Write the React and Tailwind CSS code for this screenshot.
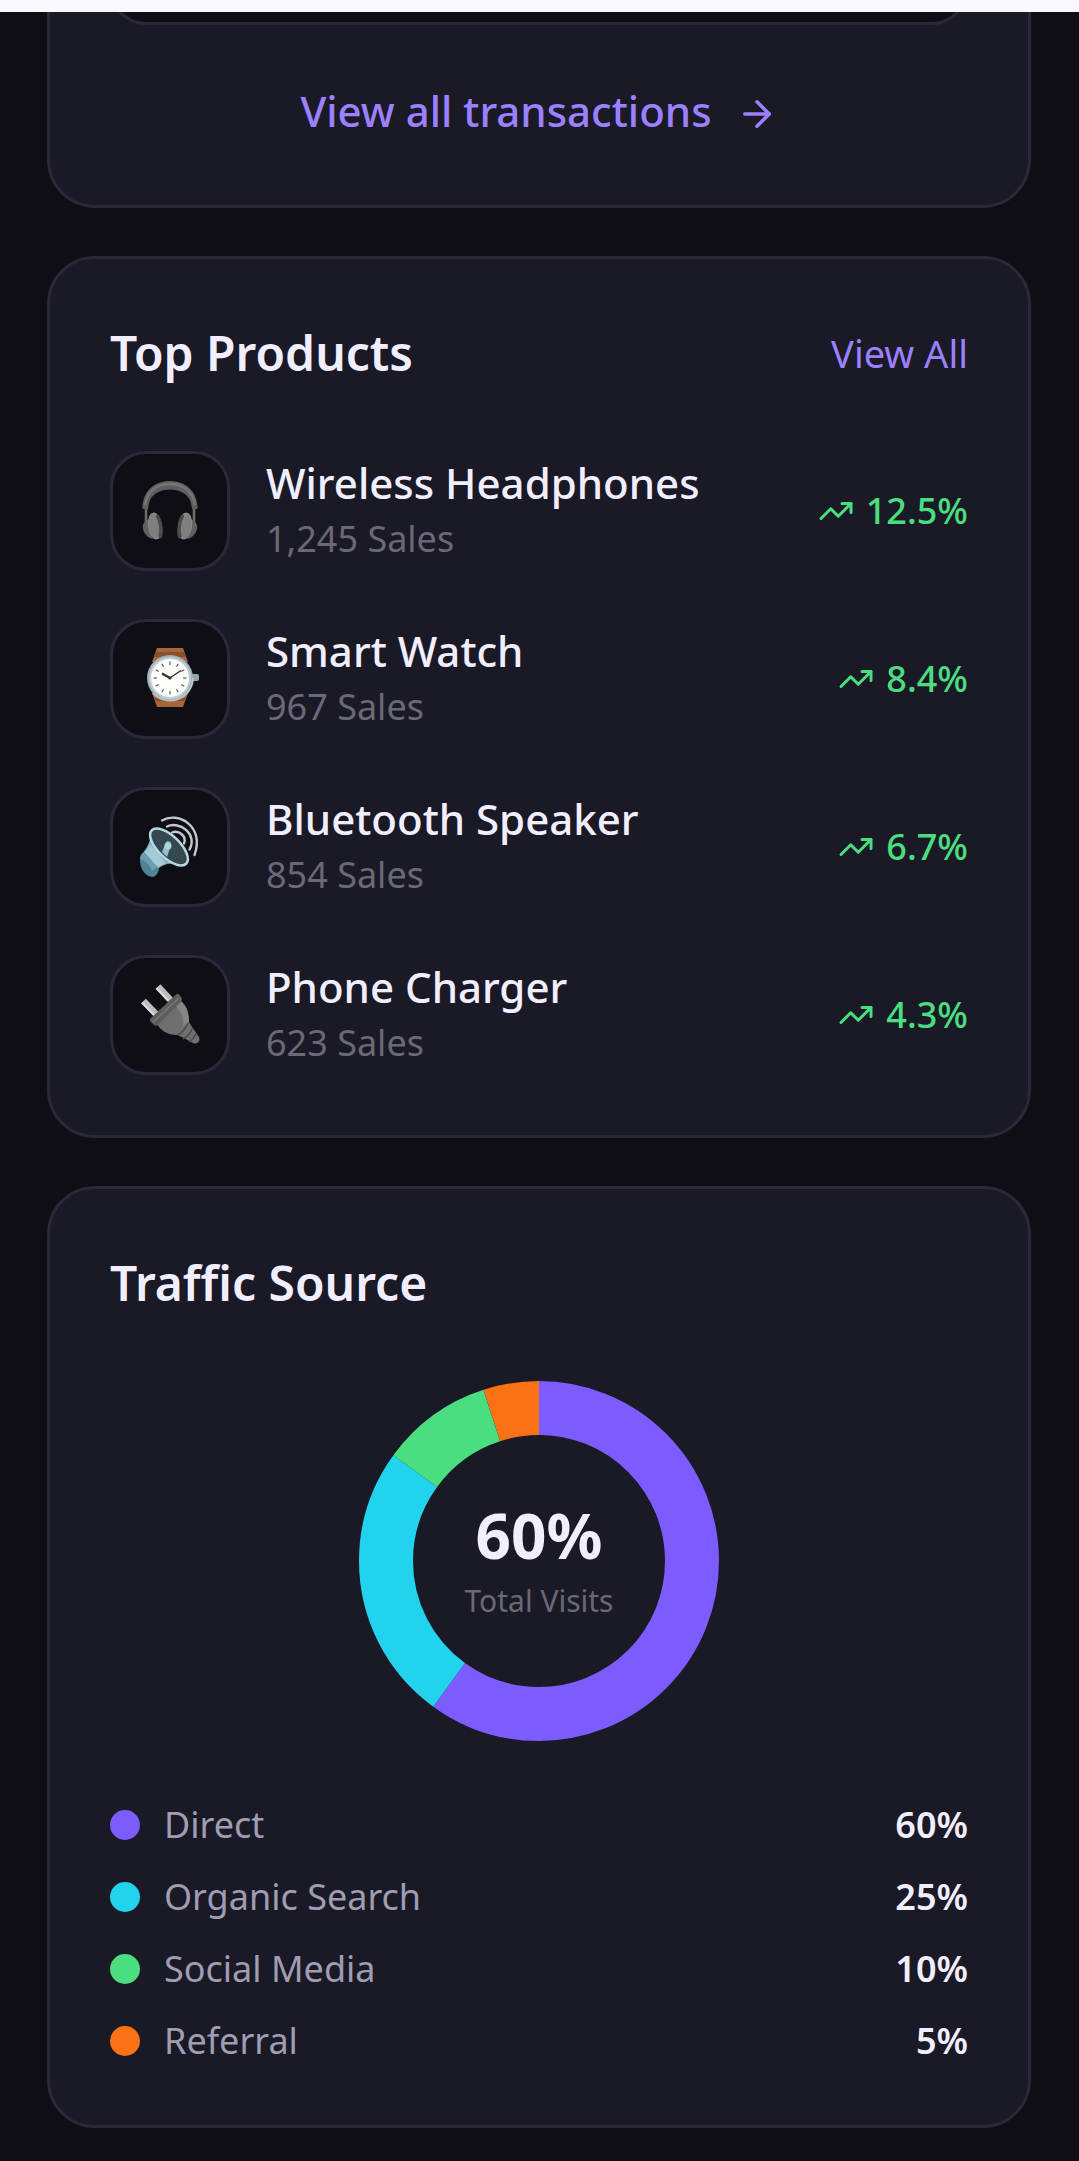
import { ArrowRight, TrendingUp } from "lucide-react";

const HeadphonesIcon = () => (
  <svg viewBox="0 0 60 60" className="size-15 overflow-visible" aria-hidden="true">
    <path d="M6 28v20M54 28v20" stroke="#6f6f6f" strokeWidth="2.5" />
    <path d="M2.5 28V25C4 9 15 0 30 0s26 9 27.5 25v3h-5.5l-1-6C48.5 13 40 8.5 30 8.5S11.5 13 9 22l-1 6z" fill="#5f5f5f" />
    <path d="M5 24C7 11 16 3 30 3s23 8 25 21" fill="none" stroke="#767676" strokeWidth="2.5" />
    <path d="M10 38c-5 1-8 5-7 10s5 9 10 10zM50 38c5 1 8 5 7 10s-5 9-10 10z" fill="#626262" />
    <ellipse cx="15" cy="45" rx="7" ry="13.5" fill="#8a8a8a" transform="rotate(-8 15 45)" />
    <ellipse cx="19" cy="45.5" rx="3.5" ry="12" fill="#4c4c4c" transform="rotate(-8 19 45.5)" />
    <ellipse cx="14" cy="45.5" rx="5" ry="12" fill="#7f7f7f" transform="rotate(-8 14 45.5)" />
    <ellipse cx="45" cy="45" rx="7" ry="13.5" fill="#8a8a8a" transform="rotate(8 45 45)" />
    <ellipse cx="41" cy="45.5" rx="3.5" ry="12" fill="#4c4c4c" transform="rotate(8 41 45.5)" />
    <ellipse cx="46" cy="45.5" rx="5" ry="12" fill="#7f7f7f" transform="rotate(8 46 45.5)" />
  </svg>
);

const WatchIcon = () => (
  <svg viewBox="0 0 60 60" className="size-15 overflow-visible" aria-hidden="true">
    <path d="M17 -1h26l5 14H12zM12 44h36l-5 14H17z" fill="#a5673a" />
    <path d="M16 3h28l2 5H14zM14 49h32l-1 3H15z" fill="#8a5029" />
    <rect x="51" y="25" width="8" height="7" rx="2" fill="#90a4ae" />
    <circle cx="30" cy="29" r="23" fill="#9fb0b8" />
    <circle cx="30" cy="29" r="21" fill="#c3ced3" />
    <path d="M13 44A23 23 0 0 0 53 29" fill="none" stroke="#b4c3ca" strokeWidth="2" />
    <circle cx="30" cy="29" r="19" fill="#fdfdfb" />
    {[0, 30, 60, 90, 120, 150, 180, 210, 240, 270, 300, 330].map((angle) => (
      <path key={angle} d="M30 12.5v3.5" stroke="#5c5c5c" strokeWidth="1.2" transform={`rotate(${angle} 30 29)`} />
    ))}
    <path d="M22 24.5l8 4.5" stroke="#333" strokeWidth="2.4" />
    <path d="M29 29.5L41 21.5" stroke="#333" strokeWidth="1.5" />
    <circle cx="30" cy="29" r="1.6" fill="#333" />
  </svg>
);

const SpeakerIcon = () => (
  <svg viewBox="0 0 60 60" className="size-15 overflow-visible" aria-hidden="true">
    <path d="M11.5 14c-1 9-3 15-8 21l14 17c6-5 14-7 26-5z" fill="#7ea9b8" />
    <path d="M10 27c-1 3-3 6-6 8l13 16 9-5z" fill="#a3cad7" />
    <path d="M4 35c-3 2-4 5-4 8 0 9 5 16 12 17 3 0 6-3 7-8z" fill="#4f8496" />
    <path d="M4 35c-3 2-4 4-4 7 5 1 10 6 12 12l5-4z" fill="#6ba0b1" />
    <ellipse cx="29" cy="30" rx="24" ry="11" transform="rotate(44 29 30)" fill="#37474f" stroke="#b8d9e3" strokeWidth="2.5" />
    <path d="M22 35l4-10c2-2 6 0 5 3l-4 12z" fill="#94bfce" />
    <circle cx="28" cy="29" r="3.5" fill="#aed4e0" />
    <g fill="none" stroke="#c3c9cc" strokeWidth="2.4" strokeLinecap="round">
      <path d="M22 3.5C38 -6 65 9 54.5 38" />
      <path d="M27 9.5c13-6 31 8 22.5 23" />
      <path d="M32 15.5c7-3 15 4 12 11" />
    </g>
  </svg>
);

const PlugIcon = () => (
  <svg viewBox="0 0 60 60" className="size-15 overflow-visible" aria-hidden="true">
    <path d="M18 1.5L30.5 15M3.5 16L17 30" stroke="#bdbdbd" strokeWidth="6.5" />
    <path d="M16.5 3L28 15.5M2 17.5L14 30" stroke="#dadada" strokeWidth="2" />
    <path d="M17 39L41 16c6 5 8 12 8 21l3 5 7 10c2 4-2 8-6 6l-11-6-5-2c-9 0-16-4-20-11z" fill="#6f6f6f" />
    <path d="M36 21c6 7 8 12 7 20l6-4c0-8-2-15-8-21z" fill="#858585" />
    <path d="M38 50c5-3 8-7 10-12M43 54c4-2 7-5 9-10M49 57c3-2 5-4 7-8" fill="none" stroke="#494949" strokeWidth="1.5" />
    <path d="M10 34L36 9.5c2-1 3-1 4 1l2 3c0 1 0 2-1 3L18 40c-1 1-3 1-4 0l-4-4z" fill="#5d5d5d" />
    <path d="M13 37L39 13" stroke="#777" strokeWidth="1.5" />
  </svg>
);

const products = [
  { name: "Wireless Headphones", sales: "1,245 Sales", growth: "12.5%", Icon: HeadphonesIcon },
  { name: "Smart Watch", sales: "967 Sales", growth: "8.4%", Icon: WatchIcon },
  { name: "Bluetooth Speaker", sales: "854 Sales", growth: "6.7%", Icon: SpeakerIcon },
  { name: "Phone Charger", sales: "623 Sales", growth: "4.3%", Icon: PlugIcon },
];

const sources = [
  { label: "Direct", value: 60, dot: "bg-[#7c5cff]", stroke: "stroke-[#7c5cff]" },
  { label: "Organic Search", value: 25, dot: "bg-[#22d3ee]", stroke: "stroke-[#22d3ee]" },
  { label: "Social Media", value: 10, dot: "bg-[#4ade80]", stroke: "stroke-[#4ade80]" },
  { label: "Referral", value: 5, dot: "bg-[#f97316]", stroke: "stroke-[#f97316]" },
];

const TransactionsCard = () => (
  <section className="px-15 pb-15 bg-[#1a1926] border-3 border-t-0 border-[#2a2839] rounded-b-[48px]">
    {/* Tail of the transactions list */}
    <div className="h-[13px] flex items-end overflow-hidden">
      <div className="w-full h-24 shrink-0 bg-[#0f0e14] border-3 border-[#2a2839] rounded-[36px]" />
    </div>
    <a href="#transactions" className="mt-[52px] py-[10px] flex items-end justify-center gap-6 text-[42px] leading-12 font-medium text-[#9b80ff]">
      View all transactions
      <ArrowRight size={42} />
    </a>
  </section>
);

const TopProducts = () => (
  <section className="p-15 bg-[#1a1926] border-3 border-[#2a2839] rounded-[48px]">
    <div className="mb-16 flex items-center justify-between">
      <h2 className="text-[48px] leading-17 font-semibold">Top Products</h2>
      <a href="#products" className="text-[38px] leading-12 text-[#9b80ff]">View All</a>
    </div>

    <ul className="flex flex-col gap-12">
      {products.map(({ name, sales, growth, Icon }) => (
        <li key={name} className="flex items-center gap-9">
          <div className="size-30 shrink-0 flex items-center justify-center bg-[#0f0e14] border-3 border-[#2a2839] rounded-[36px]">
            <Icon />
          </div>
          <div className="flex-1 min-w-0">
            <p className="text-[42px] leading-14 font-medium">{name}</p>
            <p className="text-[36px] leading-14 text-[#6b6878]">{sales}</p>
          </div>
          <div className="flex items-center gap-3 text-[36px] leading-12 font-medium text-[#4ade80]">
            <TrendingUp size={36} />
            {growth}
          </div>
        </li>
      ))}
    </ul>
  </section>
);

const TrafficDonut = () => {
  let start = 0;

  return (
    <div className="size-90 mx-auto grid place-items-center">
      <svg viewBox="0 0 360 360" className="size-90 col-start-1 row-start-1 -rotate-90" aria-hidden="true">
        {sources.map((source) => {
          const offset = -start;
          start += source.value;
          return (
            <circle
              key={source.label}
              cx="180"
              cy="180"
              r="153"
              fill="none"
              strokeWidth="54"
              pathLength="100"
              strokeDasharray={`${source.value} ${100 - source.value}`}
              strokeDashoffset={offset}
              className={source.stroke}
            />
          );
        })}
      </svg>
      <div className="col-start-1 row-start-1 text-center">
        <p className="text-[62px] leading-20 font-bold">60%</p>
        <p className="text-[30px] leading-13 text-[#6b6878]">Total Visits</p>
      </div>
    </div>
  );
};

const TrafficSource = () => (
  <section className="p-15 bg-[#1a1926] border-3 border-[#2a2839] rounded-[48px]">
    <h2 className="mb-16 text-[48px] leading-17 font-semibold">Traffic Source</h2>
    <TrafficDonut />
    <ul className="mt-15 flex flex-col gap-6">
      {sources.map((source) => (
        <li key={source.label} className="flex items-center gap-6 text-[36px] leading-12">
          <span className={`size-[30px] rounded-full ${source.dot}`} />
          <span className="flex-1 text-[#a09db3]">{source.label}</span>
          <span className="font-semibold">{source.value}%</span>
        </li>
      ))}
    </ul>
  </section>
);

export default function App() {
  return (
    <div className="min-h-screen bg-[#0f0e14] text-[#f1eeff]" style={{ fontFamily: '"Noto Sans", sans-serif' }}>
      <div className="h-3 bg-[#faf8ff]" />
      <main className="pl-[47px] pr-12 pb-8 flex flex-col gap-12">
        <TransactionsCard />
        <TopProducts />
        <TrafficSource />
      </main>
    </div>
  );
}
